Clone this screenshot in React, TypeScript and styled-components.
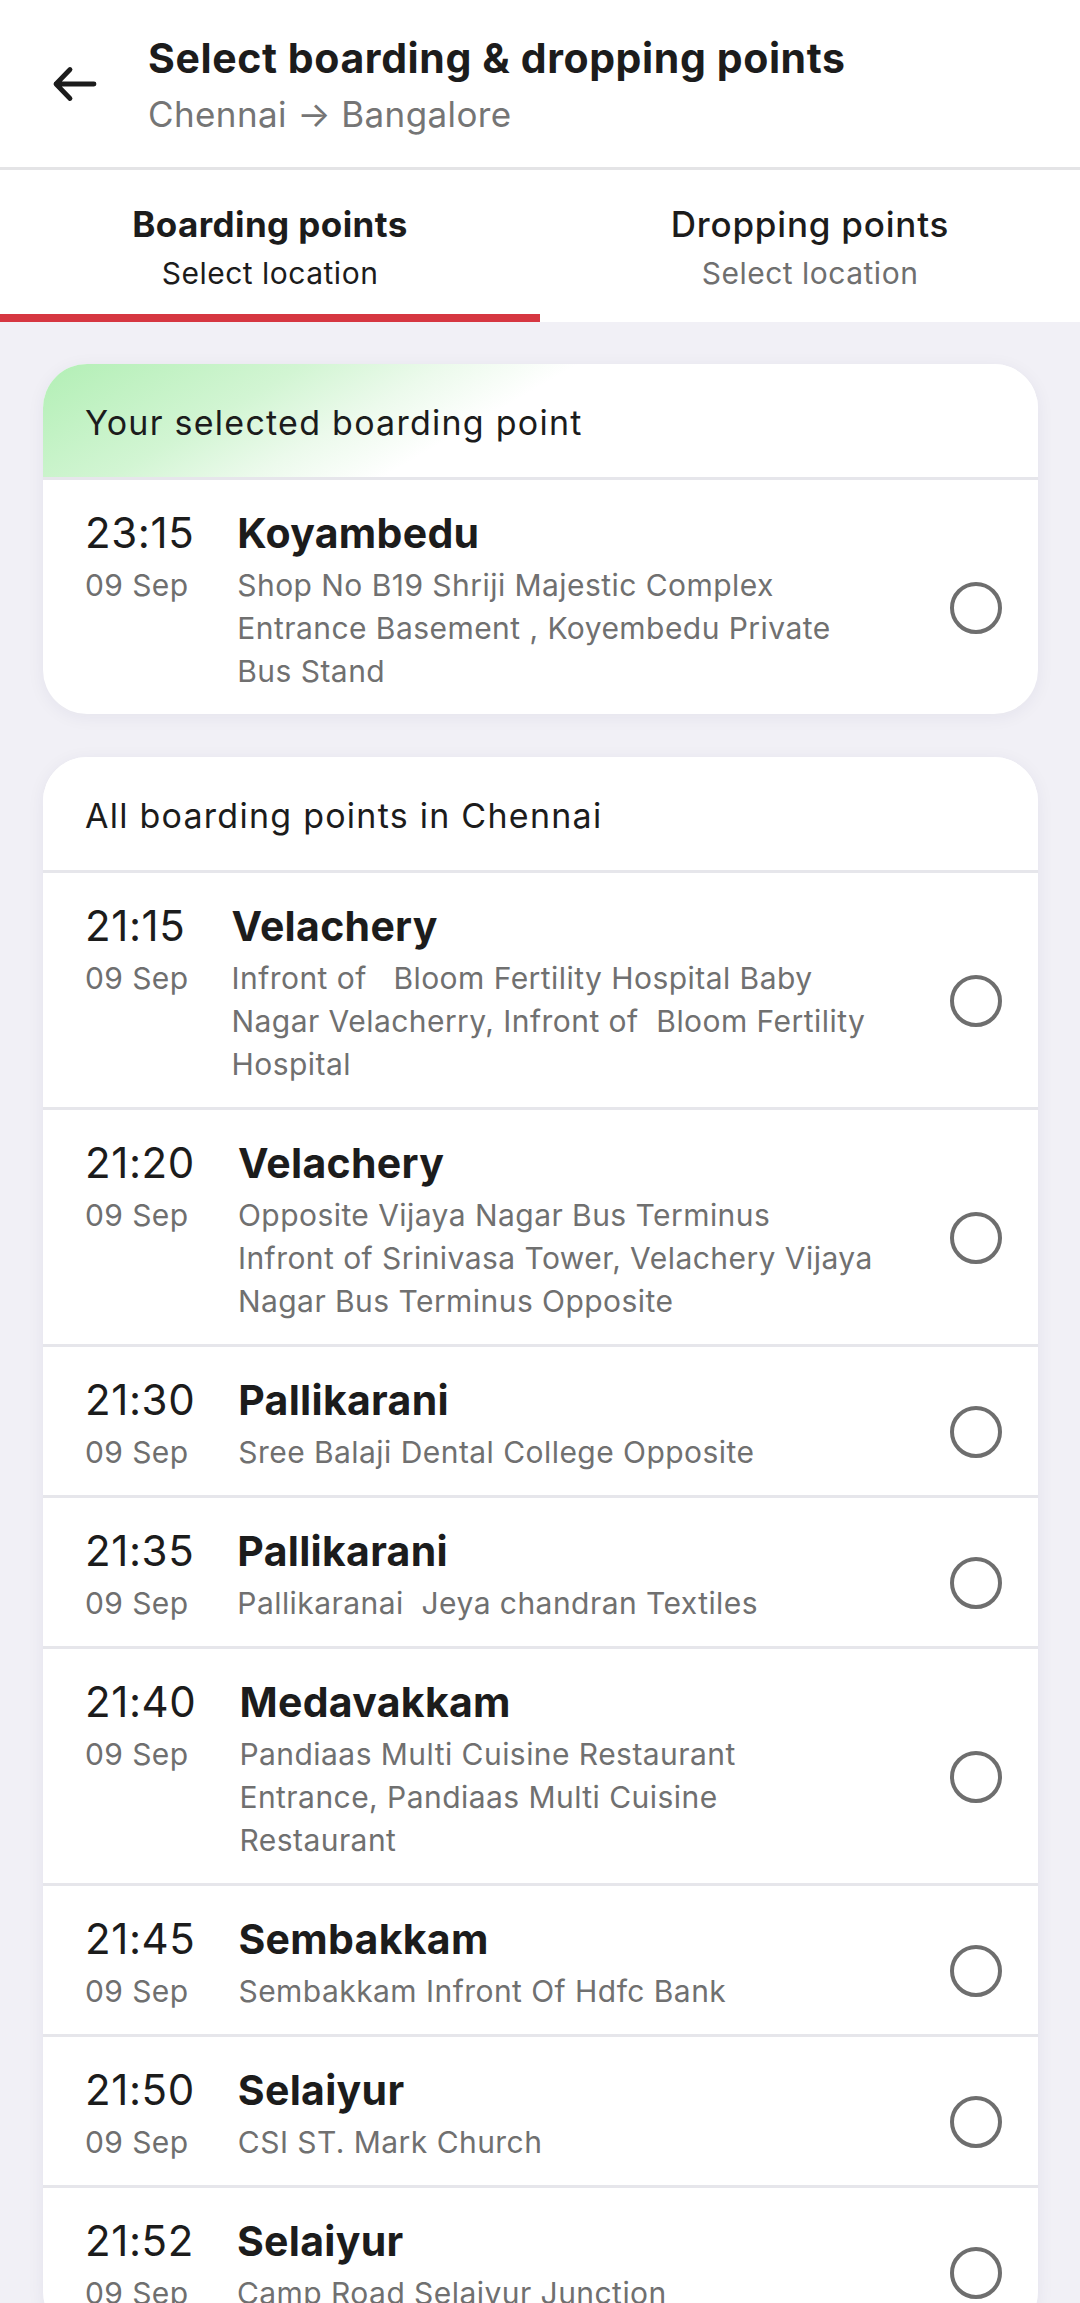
import React from "react";
import styled, { createGlobalStyle } from "styled-components";

type Point = {
    time: string;
    date: string;
    name: string;
    address: string[];
};

// address lines are kept as they break in the app
const selected: Point = {
    time: "23:15",
    date: "09 Sep",
    name: "Koyambedu",
    address: ["Shop No B19 Shriji Majestic Complex", "Entrance Basement , Koyembedu Private", "Bus Stand"],
};

const points: Point[] = [
    { time: "21:15", date: "09 Sep", name: "Velachery", address: ["Infront of   Bloom Fertility Hospital Baby", "Nagar Velacherry, Infront of  Bloom Fertility", "Hospital"] },
    { time: "21:20", date: "09 Sep", name: "Velachery", address: ["Opposite Vijaya Nagar Bus Terminus", "Infront of Srinivasa Tower, Velachery Vijaya", "Nagar Bus Terminus Opposite"] },
    { time: "21:30", date: "09 Sep", name: "Pallikarani", address: ["Sree Balaji Dental College Opposite"] },
    { time: "21:35", date: "09 Sep", name: "Pallikarani", address: ["Pallikaranai  Jeya chandran Textiles"] },
    { time: "21:40", date: "09 Sep", name: "Medavakkam", address: ["Pandiaas Multi Cuisine Restaurant", "Entrance, Pandiaas Multi Cuisine", "Restaurant"] },
    { time: "21:45", date: "09 Sep", name: "Sembakkam", address: ["Sembakkam Infront Of Hdfc Bank"] },
    { time: "21:50", date: "09 Sep", name: "Selaiyur", address: ["CSI ST. Mark Church"] },
    { time: "21:52", date: "09 Sep", name: "Selaiyur", address: ["Camp Road Selaiyur Junction"] },
];

const BackArrow = () => (
    <svg width="48" height="48" viewBox="0 0 48 48" fill="none">
        <path d="M44 24H6M20 9.5L6 24l14 14.5" stroke="#1c1c1c" strokeWidth="4.8" strokeLinecap="round" strokeLinejoin="round" />
    </svg>
);

const PointRow = ({ point }: { point: Point }) => (
    <Row>
        <TimeCol>
            <Time>{point.time}</Time>
            <DateText>{point.date}</DateText>
        </TimeCol>
        <Info>
            <Name>{point.name}</Name>
            <Address>
                {point.address.map((line, i) => (
                    <AddressLine key={i}>{line}</AddressLine>
                ))}
            </Address>
        </Info>
        <Radio />
    </Row>
);

const App = () => {
    return (
        <>
            <GlobalStyle />
            <Page>
                <Header>
                    <BackButton>
                        <BackArrow />
                    </BackButton>
                    <HeaderText>
                        <Title>Select boarding &amp; dropping points</Title>
                        <Route>Chennai → Bangalore</Route>
                    </HeaderText>
                </Header>

                <Tabs>
                    <Tab $active>
                        <TabTitle $active>Boarding points</TabTitle>
                        <TabSub $active>Select location</TabSub>
                    </Tab>
                    <Tab>
                        <TabTitle>Dropping points</TabTitle>
                        <TabSub>Select location</TabSub>
                    </Tab>
                </Tabs>

                <Content>
                    <Card>
                        <CardHeader $highlight>Your selected boarding point</CardHeader>
                        <PointRow point={selected} />
                    </Card>

                    <Card>
                        <CardHeader>All boarding points in Chennai</CardHeader>
                        {points.map((p, i) => (
                            <PointRow key={i} point={p} />
                        ))}
                    </Card>
                </Content>
            </Page>
        </>
    );
};

export default App;

const GlobalStyle = createGlobalStyle`
    * {
        box-sizing: border-box;
    }
    body {
        margin: 0;
        background: #f1f0f6;
        font-family: Inter, "Noto Sans", sans-serif;
        color: #1c1c1c;
    }
`;

const Page = styled.div`
    width: 1080px;
    height: 2303px;
    overflow: hidden;
`;

const Header = styled.header`
    display: flex;
    align-items: flex-start;
    background: #fff;
    padding: 34px 0 32px 0;
    border-bottom: 3px solid #e4e4e6;
`;

const BackButton = styled.div`
    width: 148px;
    display: flex;
    justify-content: flex-start;
    padding: 26px 0 0 50px;
`;

const HeaderText = styled.div`
    display: flex;
    flex-direction: column;
    gap: 10px;
`;

const Title = styled.div`
    font-size: 41px;
    line-height: 49px;
    font-weight: 700;
    letter-spacing: 0.6px;
    color: #1c1c1c;
`;

const Route = styled.div`
    font-size: 35px;
    line-height: 42px;
    letter-spacing: 0.4px;
    color: #757575;
`;

const Tabs = styled.nav`
    display: flex;
    background: #fff;
`;

const Tab = styled.div<{ $active?: boolean }>`
    flex: 1;
    display: flex;
    flex-direction: column;
    align-items: center;
    padding: 33px 0 22px;
    border-bottom: 8px solid ${(p) => (p.$active ? "#d63641" : "transparent")};
`;

const TabTitle = styled.div<{ $active?: boolean }>`
    font-size: 35px;
    line-height: 42px;
    font-weight: ${(p) => (p.$active ? 700 : 500)};
    letter-spacing: ${(p) => (p.$active ? "0.4px" : "0.8px")};
    color: #1c1c1c;
`;

const TabSub = styled.div<{ $active?: boolean }>`
    margin-top: 9px;
    font-size: 30px;
    line-height: 38px;
    letter-spacing: 0.5px;
    color: ${(p) => (p.$active ? "#1c1c1c" : "#6f6f6f")};
`;

const Content = styled.main`
    display: flex;
    flex-direction: column;
    gap: 43px;
    padding: 42px 42px 0 43px;
`;

const Card = styled.section`
    background: #fff;
    border-radius: 44px;
    overflow: hidden;
    box-shadow: 0 3px 18px rgba(40, 40, 80, 0.06);
`;

const CardHeader = styled.div<{ $highlight?: boolean }>`
    padding: 37px 42px 33px;
    font-size: 34px;
    line-height: 43px;
    letter-spacing: 1.25px;
    color: #1c1c1c;
    border-bottom: 3px solid #e6e6eb;
    background: ${(p) =>
        p.$highlight
            ? "linear-gradient(150deg, #b2efb5 0%, #d2f5d3 22%, #ecfaec 34%, #ffffff 45%)"
            : "#fff"};
`;

const Row = styled.div`
    display: flex;
    align-items: center;
    padding: 29px 36px 21px 42px;
    border-bottom: 3px solid #e6e6eb;

    &:last-child {
        border-bottom: none;
    }
`;

const TimeCol = styled.div`
    display: flex;
    flex-direction: column;
    align-self: flex-start;
    gap: 7px;
    margin-right: 43px;
`;

const Time = styled.div`
    font-size: 42px;
    line-height: 48px;
    letter-spacing: 0.6px;
    color: #1c1c1c;
`;

const DateText = styled.div`
    font-size: 30px;
    line-height: 43px;
    letter-spacing: 0.4px;
    color: #6f6f6f;
`;

const Info = styled.div`
    flex: 1;
    min-width: 0;
    display: flex;
    flex-direction: column;
    gap: 7px;
`;

const Name = styled.div`
    font-size: 41px;
    line-height: 48px;
    font-weight: 700;
    letter-spacing: 0.3px;
    color: #1c1c1c;
`;

const Address = styled.div`
    display: flex;
    flex-direction: column;
    font-size: 30px;
    line-height: 43px;
    letter-spacing: 0.45px;
    color: #707070;
`;

const AddressLine = styled.span`
    white-space: pre;
`;

const Radio = styled.span`
    flex: none;
    width: 52px;
    height: 52px;
    margin: 14px 0 0 40px;
    border-radius: 50%;
    border: 4.5px solid #6e6e6e;
`;
